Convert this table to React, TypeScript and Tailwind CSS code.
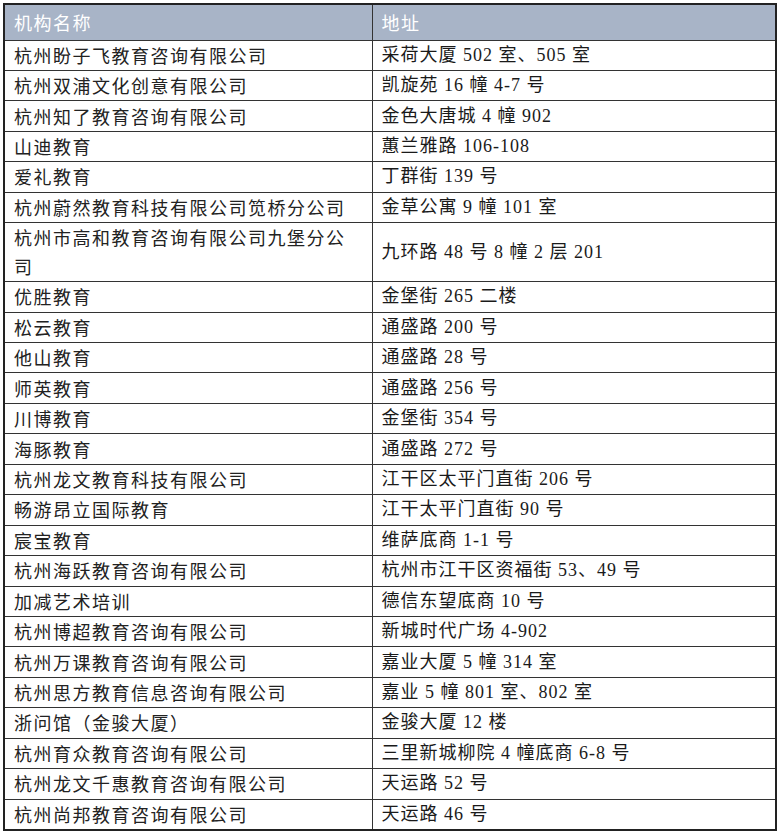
import React from 'react';

const rows: [string, string][] = [
  ['杭州盼子飞教育咨询有限公司', '采荷大厦 502 室、505 室'],
  ['杭州双浦文化创意有限公司', '凯旋苑 16 幢 4-7 号'],
  ['杭州知了教育咨询有限公司', '金色大唐城 4 幢 902'],
  ['山迪教育', '蕙兰雅路 106-108'],
  ['爱礼教育', '丁群街 139 号'],
  ['杭州蔚然教育科技有限公司笕桥分公司', '金草公寓 9 幢 101 室'],
  ['杭州市高和教育咨询有限公司九堡分公司', '九环路 48 号 8 幢 2 层 201'],
  ['优胜教育', '金堡街 265 二楼'],
  ['松云教育', '通盛路 200 号'],
  ['他山教育', '通盛路 28 号'],
  ['师英教育', '通盛路 256 号'],
  ['川博教育', '金堡街 354 号'],
  ['海豚教育', '通盛路 272 号'],
  ['杭州龙文教育科技有限公司', '江干区太平门直街 206 号'],
  ['畅游昂立国际教育', '江干太平门直街 90 号'],
  ['宸宝教育', '维萨底商 1-1 号'],
  ['杭州海跃教育咨询有限公司', '杭州市江干区资福街 53、49 号'],
  ['加减艺术培训', '德信东望底商 10 号'],
  ['杭州博超教育咨询有限公司', '新城时代广场 4-902'],
  ['杭州万课教育咨询有限公司', '嘉业大厦 5 幢 314 室'],
  ['杭州思方教育信息咨询有限公司', '嘉业 5 幢 801 室、802 室'],
  ['浙问馆（金骏大厦）', '金骏大厦 12 楼'],
  ['杭州育众教育咨询有限公司', '三里新城柳院 4 幢底商 6-8 号'],
  ['杭州龙文千惠教育咨询有限公司', '天运路 52 号'],
  ['杭州尚邦教育咨询有限公司', '天运路 46 号'],
];

const sans = "font-['Noto_Sans_CJK_SC',sans-serif]";
const serif = "font-['Liberation_Serif','Noto_Sans_CJK_SC',serif]";

export default function App() {
  return (
    <div className="w-[780px] h-[832px] bg-white pt-[3px] pl-[3px]">
      <table className="w-[774px] border-collapse border-2 border-[#222] table-fixed">
        <colgroup>
          <col className="w-[368px]" />
          <col />
        </colgroup>
        <thead>
          <tr className="h-[36px] bg-[#a8b4c7]">
            <th className={`border border-[#333] px-[9px] text-left font-normal text-[18px] tracking-[1.5px] text-white ${sans}`}>
              机构名称
            </th>
            <th className={`border border-[#333] px-[9px] text-left font-normal text-[18px] tracking-[1.5px] text-white ${sans}`}>
              地址
            </th>
          </tr>
        </thead>
        <tbody>
          {rows.map(([name, addr]) => (
            <tr key={name} className="h-[30.45px]">
              <td className={`border border-[#333] pl-[9px] pr-[12px] py-0 text-[18px] leading-[29px] tracking-[1.5px] text-[#222] ${sans}`}>
                {name}
              </td>
              <td className={`border border-[#333] px-[9px] py-0 text-[18px] leading-[29px] tracking-[1px] text-[#1a1a1a] ${serif}`}>
                {addr}
              </td>
            </tr>
          ))}
        </tbody>
      </table>
    </div>
  );
}
